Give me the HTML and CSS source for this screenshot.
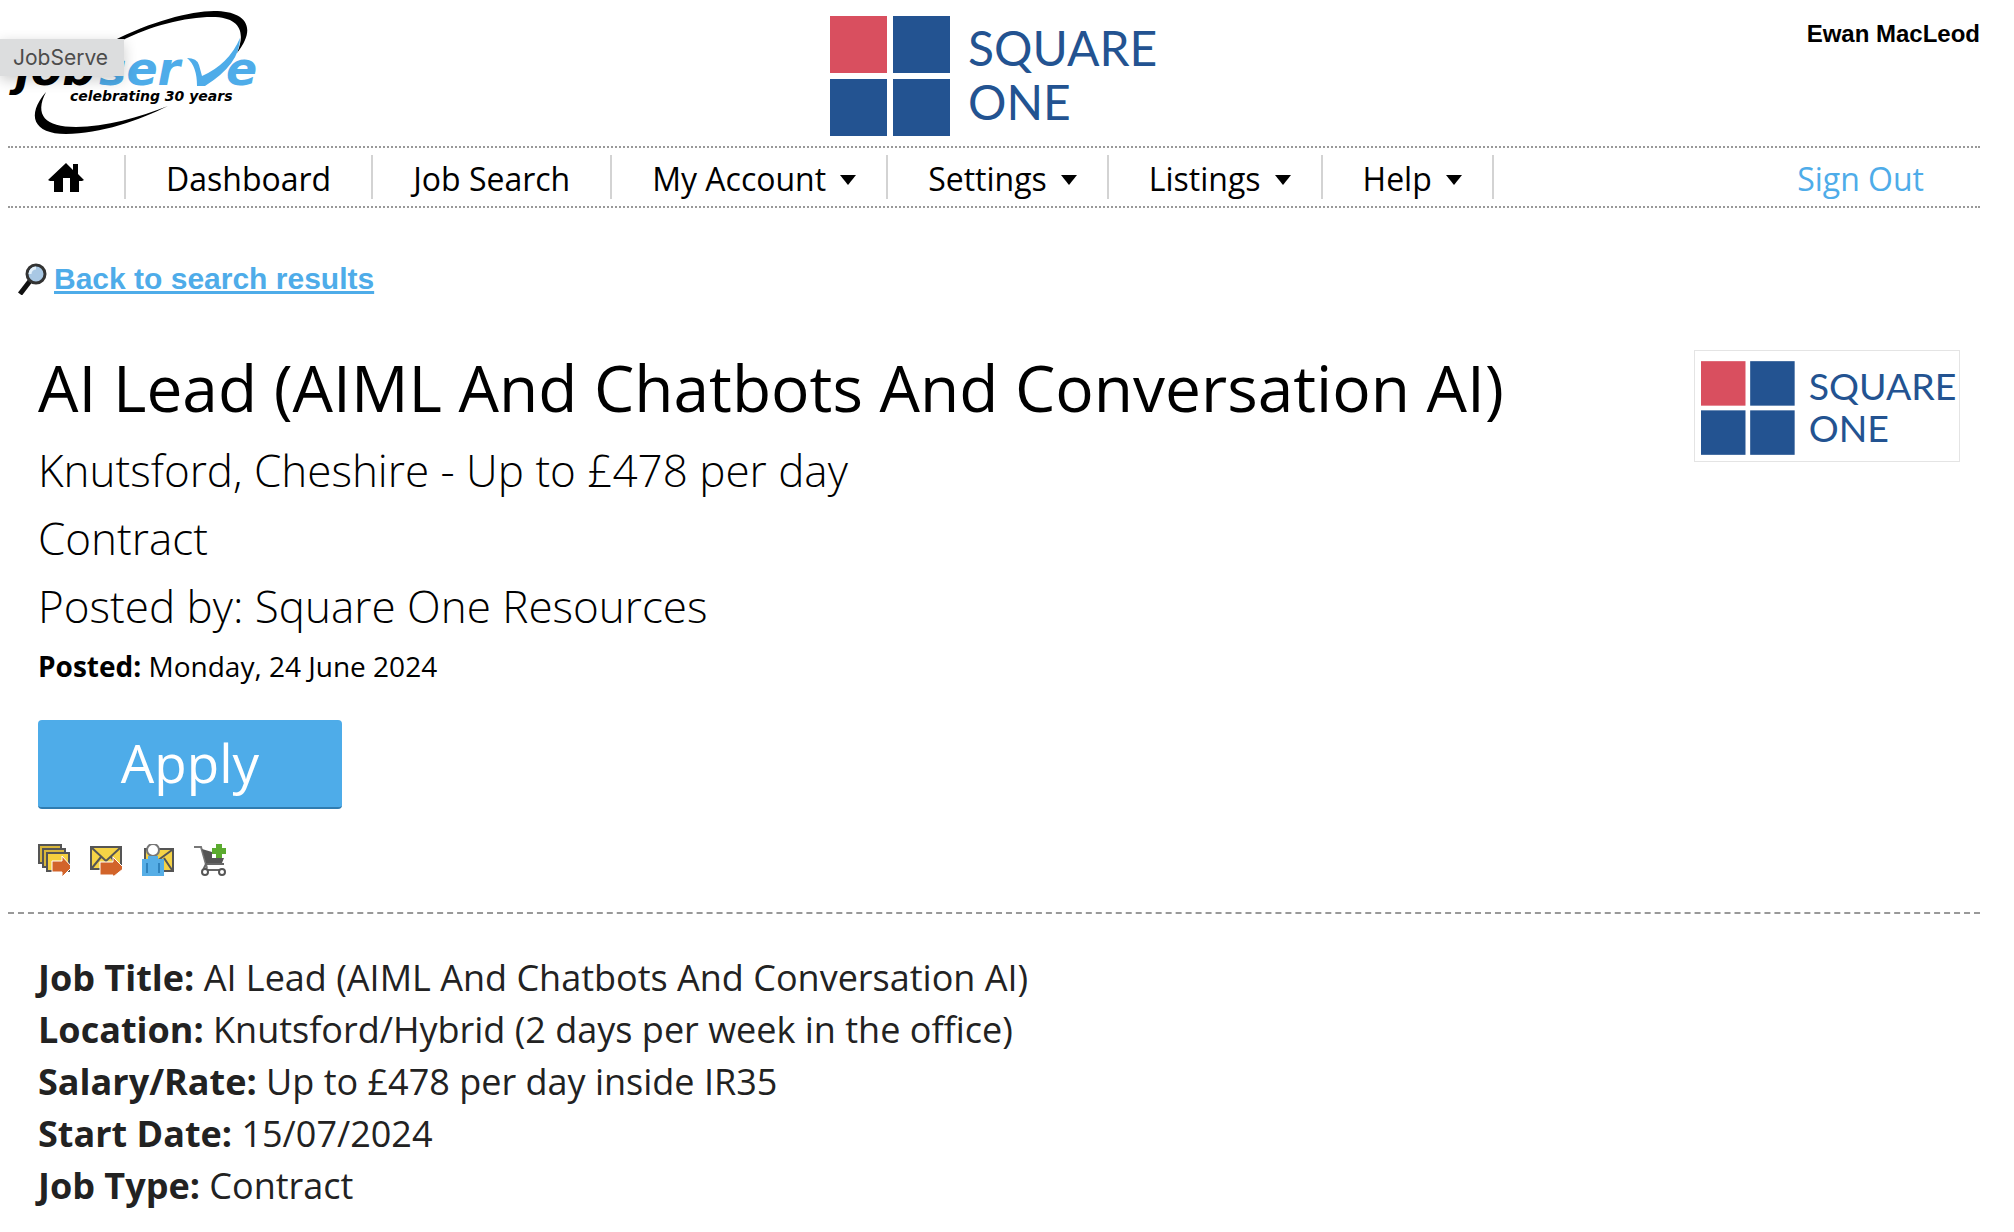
FILE: index.html
```html
<!DOCTYPE html>
<html lang="en">
<head>
  <meta charset="UTF-8" />
  <meta name="viewport" content="width=device-width, initial-scale=1.0"/>
  <title>AI Lead (AIML And Chatbots And Conversation AI) - JobServe</title>
  <link rel="stylesheet" href="styles.css">
</head>
<body>
  <!-- Header -->
  <header class="header">
    <a class="brand" href="#" aria-label="JobServe home">
      <svg width="252" height="136" viewBox="8 0 252 136">
        <path d="M113 41C150 22 190 11 214 11C243 11 259 25 237 53C246 32 240 17 212 17C185 17 150 26 121 41Z"/>
        <path d="M46 92C26 115 33 134 66 134C100 134 140 120 168 106C140 117 105 127 76 127C45 127 34 115 46 92Z"/>
        <text class="brand-name" x="15" y="85">job</text>
        <text class="brand-name brand-blue" x="99" y="85">ser</text>
        <path class="brand-blue" d="M187 58Q197 58 199 65L202 76Q229 64 240 38Q240 64 205 86H197Q197 66 187 58Z"/>
        <text class="brand-name brand-blue" x="226" y="85">e</text>
        <text class="brand-tag" x="70" y="101">celebrating 30 years</text>
      </svg>
      <span class="tooltip">JobServe</span>
    </a>
    <svg class="agency-logo" width="328" height="120" viewBox="0 0 328 120" role="img" aria-label="Square One">
      <rect class="sq-red" width="57" height="57"/>
      <rect class="sq-blue" x="63" width="57" height="57"/>
      <rect class="sq-blue" y="63" width="57" height="57"/>
      <rect class="sq-blue" x="63" y="63" width="57" height="57"/>
      <text class="sq-text" x="138" y="50">SQUARE</text>
      <text class="sq-text" x="138" y="104">ONE</text>
    </svg>
    <span class="user-name">Ewan MacLeod</span>
  </header>

  <!-- Main menu -->
  <nav class="nav">
    <a class="nav-item" href="#" aria-label="Home">
      <svg width="36" height="30" viewBox="0 0 36 30">
        <path d="M18 0L25 7V1H30V11L36 17L34 18H31V29H22V15H15V29H6V18H2L0 17Z"/>
      </svg>
    </a>
    <a class="nav-item" href="#">Dashboard</a>
    <a class="nav-item" href="#">Job Search</a>
    <a class="nav-item has-menu" href="#">My Account</a>
    <a class="nav-item has-menu" href="#">Settings</a>
    <a class="nav-item has-menu" href="#">Listings</a>
    <a class="nav-item has-menu" href="#">Help</a>
    <a class="sign-out" href="#">Sign Out</a>
  </nav>

  <main>
    <div class="back">
      <svg width="30" height="32" viewBox="0 0 30 32">
        <path d="M12 18L2 31" stroke="#111" stroke-width="5"/>
        <circle cx="18" cy="11" r="9" fill="#a9c8e4" stroke="#333" stroke-width="3"/>
        <path d="M12 11A6 6 0 0 1 18 5" fill="none" stroke="#e3f0fa" stroke-width="3"/>
      </svg>
      <a href="#">Back to search results</a>
    </div>

    <!-- Job summary -->
    <section class="summary">
      <div class="summary-text">
        <h1>AI Lead (AIML And Chatbots And Conversation AI)</h1>
        <p class="lead">Knutsford, Cheshire - Up to £478 per day</p>
        <p class="lead">Contract</p>
        <p class="lead">Posted by: Square One Resources</p>
        <p class="posted"><strong>Posted:</strong> Monday, 24 June 2024</p>
        <button class="btn-apply" type="button">Apply</button>
        <div class="actions">
          <a href="#" aria-label="Send similar jobs">
            <svg width="32" height="32" viewBox="0 0 32 32">
              <g fill="#d9b73a" stroke="#555" stroke-width="2">
                <rect x="1" y="1" width="22" height="18"/>
                <rect x="5" y="5" width="22" height="18"/>
                <rect x="9" y="9" width="22" height="18" fill="#f5d03e"/>
              </g>
              <path d="M14 17H24V12L33 22V24L24 33V28H14Z" fill="#d2642a" stroke="#fff" stroke-width="1"/>
            </svg>
          </a>
          <a href="#" aria-label="Email job">
            <svg width="32" height="32" viewBox="0 0 32 32">
              <rect x="1" y="3" width="30" height="22" fill="#f5d346" stroke="#555" stroke-width="2"/>
              <path d="M2 4L16 17L30 4M2 24L11 13M30 24L21 13" fill="none" stroke="#555" stroke-width="2"/>
              <path d="M10 18H23V13L33 23V25L23 33V31H10Z" fill="#d2642a" stroke="#fff" stroke-width="1"/>
            </svg>
          </a>
          <a href="#" aria-label="Email a friend">
            <svg width="32" height="32" viewBox="0 0 32 32">
              <rect x="3" y="5" width="28" height="22" fill="#f5d346" stroke="#555" stroke-width="2"/>
              <path d="M15 17L30 6M22 14L30 26" stroke="#555" stroke-width="2"/>
              <circle cx="11" cy="6" r="6" fill="#fff" stroke="#777" stroke-width="2"/>
              <path d="M0 15H6V12H16V15H22V32H0Z" fill="#56aee6"/>
              <path d="M5 19V29M17 19V29" stroke="#2f83bd" stroke-width="2"/>
            </svg>
          </a>
          <a href="#" aria-label="Add to basket">
            <svg width="32" height="32" viewBox="0 0 32 32">
              <path d="M0 3H7L13 24" fill="none" stroke="#777" stroke-width="2"/>
              <path d="M8 5L18 8V14H30L28 19H12Z" fill="#555"/>
              <path d="M30 20H12L10 24L14 26H30" fill="none" stroke="#666" stroke-width="2"/>
              <circle cx="11" cy="28" r="3" fill="#fff" stroke="#555" stroke-width="2"/>
              <circle cx="28" cy="28" r="3" fill="#fff" stroke="#555" stroke-width="2"/>
              <path d="M22 0H28V4H32V10H28V14H22V10H18V4H22Z" fill="#5bab2f"/>
            </svg>
          </a>
        </div>
      </div>
      <div class="company-box">
        <svg width="256" height="94" viewBox="0 0 328 120" role="img" aria-label="Square One Resources">
          <rect class="sq-red" width="57" height="57"/>
          <rect class="sq-blue" x="63" width="57" height="57"/>
          <rect class="sq-blue" y="63" width="57" height="57"/>
          <rect class="sq-blue" x="63" y="63" width="57" height="57"/>
          <text class="sq-text" x="138" y="50">SQUARE</text>
          <text class="sq-text" x="138" y="104">ONE</text>
        </svg>
      </div>
    </section>

    <!-- Job details -->
    <section class="details">
      <p><strong>Job Title:</strong> AI Lead (AIML And Chatbots And Conversation AI)</p>
      <p><strong>Location:</strong> Knutsford/Hybrid (2 days per week in the office)</p>
      <p><strong>Salary/Rate:</strong> Up to £478 per day inside IR35</p>
      <p><strong>Start Date:</strong> 15/07/2024</p>
      <p><strong>Job Type:</strong> Contract</p>
    </section>
  </main>
</body>
</html>
```
FILE: styles.css
```css
* {
  box-sizing: border-box;
  margin: 0;
  padding: 0;
}
body {
  background: #fff;
  color: #000;
  font-family: "Open Sans", "Noto Sans", sans-serif;
  padding: 0 34px 0 8px;
}
a {
  color: inherit;
  text-decoration: none;
}
svg {
  display: block;
}
/* Header */
.header {
  display: grid;
  grid-template-columns: 1fr auto 1fr;
  padding-bottom: 10px;
}
.brand {
  position: relative;
  justify-self: start;
}
.brand svg {
  overflow: visible;
}
.brand-name {
  font: italic bold 46px "DejaVu Sans", sans-serif;
}
.brand-blue {
  fill: #4eace9;
}
.brand-tag {
  font: italic bold 14px "DejaVu Sans", sans-serif;
}
/* hover label over the logo, runs off the left edge */
.tooltip {
  position: absolute;
  left: -8px;
  top: 39px;
  padding: 1px 16px 0 13px;
  background: #dcddde;
  color: #4c4c4c;
  font: 21px/36px Inter, sans-serif;
  box-shadow: 0 4px 14px rgba(0,0,0,0.2);
}
.agency-logo {
  margin-top: 16px;
}
.sq-red {
  fill: #d94f5f;
}
.sq-blue {
  fill: #235391;
}
.sq-text {
  fill: #235391;
  font: 48px Lato, sans-serif;
}
.user-name {
  justify-self: end;
  font: bold 24px/28px "Liberation Sans", Arial, sans-serif;
  margin-top: 20px;
}
/* Menu */
.nav {
  display: flex;
  align-items: center;
  min-height: 62px;
  border-top: 2px dotted #999;
  border-bottom: 2px dotted #999;
  font-size: 32px;
}
.nav-item,
.sign-out {
  display: flex;
  align-items: center;
  height: 44px;
  padding: 2px 40px 0;
}
.nav-item {
  border-right: 2px solid #d3d3d3;
}
.has-menu {
  padding-right: 30px;
}
.has-menu::after {
  content: "";
  margin: 4px 0 0 14px;
  border: 8px solid transparent;
  border-top: 10px solid #000;
  border-bottom: 0;
}
.sign-out {
  margin-left: auto;
  padding-right: 56px;
  color: #4eace9;
}
/* Back link */
.back {
  display: flex;
  align-items: center;
  gap: 6px;
  padding: 54px 0 0 10px;
  font: bold 30px/34px "Liberation Sans", Arial, sans-serif;
}
.back a {
  color: #4eace9;
  text-decoration: underline;
}
/* Job summary */
.summary {
  display: flex;
  justify-content: space-between;
  align-items: flex-start;
  padding: 52px 20px 36px 30px;
  border-bottom: 2px dashed #999;
}
h1 {
  font-size: 64px;
  font-weight: 400;
  line-height: 80px;
  margin-bottom: 8px;
}
.lead {
  font-size: 44px;
  font-weight: 300;
  line-height: 68px;
}
.posted {
  font-size: 28px;
  line-height: 52px;
}
.btn-apply {
  display: block;
  width: 304px;
  height: 89px;
  margin: 28px 0 35px;
  padding-bottom: 2px;
  border: 0;
  border-bottom: 2px solid #2f7cb0;
  border-radius: 4px;
  background: #4eace9;
  color: #fff;
  font-family: inherit;
  font-size: 53px;
  cursor: pointer;
}
.actions {
  display: flex;
  gap: 20px;
}
.company-box {
  border: 1px solid #e4e4e4;
  margin-top: 2px;
  padding: 10px 2px 6px 6px;
}
/* Job details */
.details {
  padding: 38px 30px;
  color: #222;
  font-size: 36px;
  line-height: 52px;
}
```
